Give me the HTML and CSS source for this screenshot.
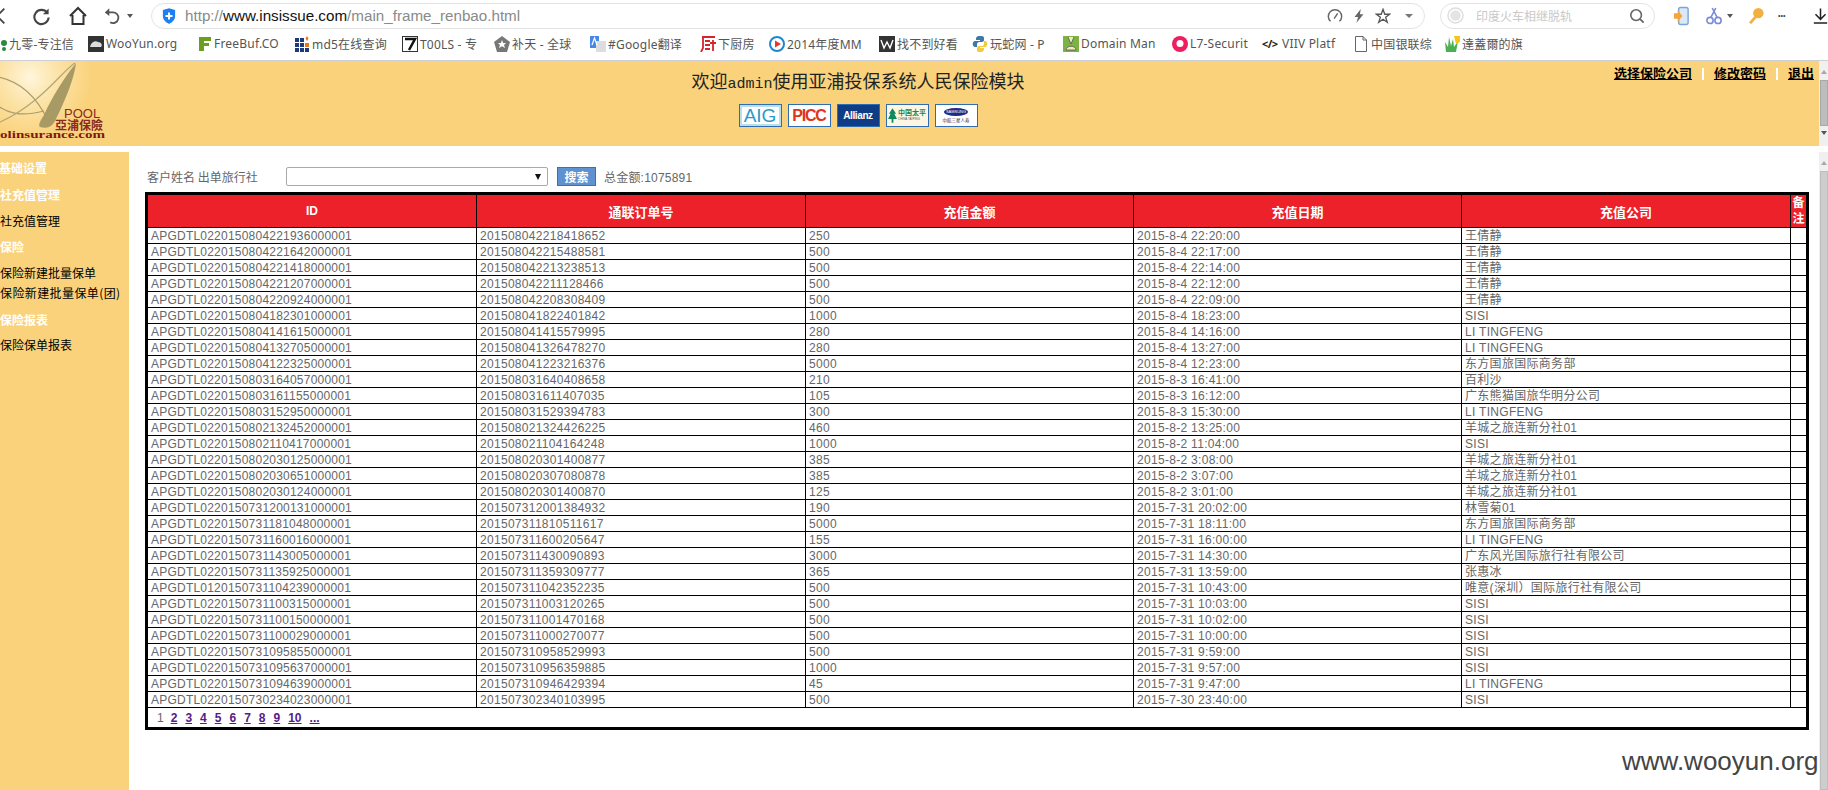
FILE: index.html
```html
<!DOCTYPE html>
<html lang="zh">
<head>
<meta charset="utf-8">
<title>亚浦投保系统</title>
<link rel="stylesheet" href="styles.css">
</head>
<body>
<div class="toolbar">
  <div class="nav">
    <svg class="i back" viewBox="0 0 12 24"><path d="M8 4 L0 12 L8 20" fill="none" stroke="#444" stroke-width="2"/></svg>
    <svg class="i reload" viewBox="0 0 20 20"><path d="M16 6 A7.5 7.5 0 1 0 17.5 11" fill="none" stroke="#444" stroke-width="2.2"/><path d="M17.5 1.5 V7.5 H11.5 Z" fill="#444"/></svg>
    <svg class="i home" viewBox="0 0 20 20"><path d="M2 10 L10 2 L18 10 M4.5 9 V18 H15.5 V9" fill="none" stroke="#333" stroke-width="2"/></svg>
    <svg class="i undo" viewBox="0 0 20 20"><path d="M5 6 H10 A6 6 0 1 1 8 17" fill="none" stroke="#555" stroke-width="2"/><path d="M7 1.5 V10 L2 6 Z" fill="#555"/></svg>
    <span class="caret"></span>
  </div>
  <div class="address">
    <svg class="shield" viewBox="0 0 16 18"><path d="M8 0 L15 2 V9 C15 14 11 16.500 8 18 C5 16.500 1 14 1 9 V2 Z" fill="#1e7ff0"/><path d="M8 5 V13 M4 9 H12" stroke="#fff" stroke-width="2.200"/></svg>
    <span class="url"><span class="dim">http://</span>www.insissue.com<span class="dim">/main_frame_renbao.html</span></span>
    <div class="addr-tools">
      <svg class="i16" viewBox="0 0 18 18"><path d="M4 15 A7.500 7.500 0 1 1 14 15" fill="none" stroke="#666" stroke-width="1.600"/><path d="M8 12 L12 6" stroke="#666" stroke-width="1.600"/></svg>
      <svg class="i16" viewBox="0 0 18 18"><path d="M11 1 L4 10 H8 L6 17 L14 7 H10 Z" fill="#666"/></svg>
      <svg class="i16" viewBox="0 0 18 18"><path d="M9 1.500 L11 7 H16.500 L12 10.500 L13.800 16 L9 12.700 L4.200 16 L6 10.500 L1.500 7 H7 Z" fill="none" stroke="#555" stroke-width="1.500"/></svg>
      <span class="caret"></span>
    </div>
  </div>
  <div class="search">
    <svg class="s-logo" viewBox="0 0 18 18"><circle cx="9" cy="9" r="8" fill="none" stroke="#ddd" stroke-width="1.500"/><circle cx="9" cy="9" r="5.500" fill="#e4e4e4"/></svg>
    <span class="placeholder">印度火车相继脱轨</span>
    <svg class="i16" viewBox="0 0 18 18"><circle cx="8" cy="8" r="6" fill="none" stroke="#666" stroke-width="1.800"/><path d="M12.500 12.500 L16.500 16.500" stroke="#666" stroke-width="2"/></svg>
  </div>
  <div class="tools">
    <svg class="i18 phone" viewBox="0 0 18 20"><rect x="6" y="1" width="10" height="18" rx="2" fill="#dbe8f6" stroke="#7ba6d8" stroke-width="1.500"/><path d="M1 7 H5 V4 L10 10 L5 16 V13 H1 Z" fill="#f5a53c"/></svg>
    <svg class="i18 scissors" viewBox="0 0 18 20"><circle cx="4.500" cy="15" r="3.500" fill="none" stroke="#7b8cd6" stroke-width="1.800"/><circle cx="13.500" cy="15" r="3.500" fill="none" stroke="#7b8cd6" stroke-width="1.800"/><path d="M5.500 11.500 L11 1 M12.500 11.500 L7 1" stroke="#7b8cd6" stroke-width="1.800"/></svg>
    <span class="caret"></span>
    <svg class="i18 key" viewBox="0 0 18 20"><circle cx="12" cy="7" r="5.500" fill="#f3b03f"/><path d="M8 10 L2 17 L4.500 18.500 L10 12 Z" fill="#f3b03f"/></svg>
    <span class="dots">•••</span>
    <svg class="i18 dl" viewBox="0 0 18 20"><path d="M9 1 V13 M3 8 L9 14 L15 8 M1 18.500 H17" fill="none" stroke="#222" stroke-width="1.800"/></svg>
  </div>
</div>

<div class="bookmarks">
  <div class="bm"><svg class="bi" viewBox="0 0 16 16"><circle cx="13" cy="7" r="3" fill="#2a8a3c"/><circle cx="13" cy="13" r="2" fill="#2a8a3c"/></svg><span>九零-专注信</span></div>
  <div class="bm"><svg class="bi" viewBox="0 0 16 16"><rect width="16" height="16" fill="#333"/><path d="M2 11 C3 6 7 4 10 6 C13 6 15 9 13 11 Z" fill="#ddd"/></svg><span>WooYun.org</span></div>
  <div class="bm"><svg class="bi" viewBox="0 0 16 16"><path d="M3 1 H15 V5 H8 V7 H13 V10 H8 V15 H3 Z" fill="#6b9d1f"/></svg><span>FreeBuf.CO</span></div>
  <div class="bm"><svg class="bi" viewBox="0 0 16 16"><path d="M1 2 H5 V6 H1 Z M6 2 H10 V6 H6 Z M1 7 H5 V11 H1 Z M6 7 H10 V11 H6 Z M1 12 H5 V16 H1 Z M6 12 H10 V16 H6 Z M11 12 H15 V16 H11 Z" fill="#1f3a7a"/><path d="M11 7 H15 V11 H11 Z M13 0 L14.500 2.500 L13 5 L11.500 2.500 Z" fill="#e8761e"/></svg><span>md5在线查询</span></div>
  <div class="bm"><svg class="bi" viewBox="0 0 16 16"><rect x="0.500" y="0.500" width="15" height="15" fill="#fff" stroke="#333"/><path d="M3 3 H13 L7 14" fill="none" stroke="#111" stroke-width="2.500"/></svg><span>T00LS - 专</span></div>
  <div class="bm"><svg class="bi" viewBox="0 0 16 16"><path d="M8 0 L16 6 L13 16 H3 L0 6 Z" fill="#777"/><path d="M8 4 L9.200 7 H12 L10 9 L11 12 L8 10.300 L5 12 L6 9 L4 7 H6.800 Z" fill="#fff"/></svg><span>补天 - 全球</span></div>
  <div class="bm"><svg class="bi" viewBox="0 0 16 16"><path d="M0 0 H9 V12 H0 Z" fill="#4a86e8"/><path d="M6 5 H16 V16 H6 Z" fill="#ddd"/><path d="M2 9 L4.500 2 L7 9" fill="none" stroke="#fff" stroke-width="1.200"/></svg><span>#Google翻译</span></div>
  <div class="bm"><svg class="bi" viewBox="0 0 16 16"><path d="M2 1 H15 M3 1 V12 L1 16 M5 5 H10 M5 9 H10 M5 13 H10 M13 4 V15 M10 7 H16" fill="none" stroke="#d8232a" stroke-width="1.800"/></svg><span>下厨房</span></div>
  <div class="bm"><svg class="bi" viewBox="0 0 16 16"><circle cx="8" cy="8" r="7" fill="#fff" stroke="#1f86d0" stroke-width="2"/><path d="M6 4.500 L12 8 L6 11.500 Z" fill="#e8352e"/></svg><span>2014年度MM</span></div>
  <div class="bm"><svg class="bi" viewBox="0 0 16 16"><rect width="16" height="16" fill="#333"/><path d="M2 4 L5 12 L8 6 L11 12 L14 4" fill="none" stroke="#fff" stroke-width="1.400"/></svg><span>找不到好看</span></div>
  <div class="bm"><svg class="bi" viewBox="0 0 16 16"><path d="M8 0 C4 0 4 2 4 4 H8 V5 H3 C0 5 0 11 3 11 H5 V8 C5 7 6 6 7 6 H10 C11 6 12 5 12 4 V2 C12 0 10 0 8 0 Z" fill="#3c78aa"/><path d="M8 16 C12 16 12 14 12 12 H8 V11 H13 C16 11 16 5 13 5 H12 V8 C12 9 11 10 10 10 H7 C6 10 5 11 5 12 V14 C5 16 6 16 8 16 Z" fill="#f5c93c"/></svg><span>玩蛇网 - P</span></div>
  <div class="bm"><svg class="bi" viewBox="0 0 16 16"><rect width="16" height="16" fill="#7cb342"/><path d="M5 1 L8 8 L11 1 M3 14 C3 9 13 9 13 14 Z" fill="#f4e6c0" stroke="#555" stroke-width=".8"/></svg><span>Domain Man</span></div>
  <div class="bm"><svg class="bi" viewBox="0 0 16 16"><circle cx="8" cy="8" r="8" fill="#ee1f5f"/><circle cx="8" cy="7.500" r="3.500" fill="#fff"/></svg><span>L7-Securit</span></div>
  <div class="bm bm-code"><b class="code">&lt;/&gt;</b><span>VIIV Platf</span></div>
  <div class="bm"><svg class="bi" viewBox="0 0 16 16"><path d="M2.500 .5 H10 L13.500 4 V15.500 H2.500 Z M10 .5 V4 H13.500" fill="#fff" stroke="#666"/></svg><span>中国银联综</span></div>
  <div class="bm"><svg class="bi" viewBox="0 0 16 16"><path d="M2 16 L1 6 L4 11 L5 1 L7 10 L9 3 L10 11 L14 5 L12 16 Z" fill="#4caf50"/><path d="M10 0 H16 V6 L12 8 Z" fill="#f5c518"/></svg><span>達蓋爾的旗</span></div>
</div>

<div class="page">
  <div class="content">
    <header class="banner">
      <svg class="logo" viewBox="0 0 107 85">
        <defs>
          <radialGradient id="glow"><stop offset="0" stop-color="#fff6dc"/><stop offset=".45" stop-color="#fce3a8"/><stop offset="1" stop-color="#fad27b"/></radialGradient>
        </defs>
        <rect width="107" height="85" fill="#fad27b"/>
        <circle cx="30" cy="16" r="62" fill="url(#glow)"/>
        <path d="M-2 16 C18 20 36 34 48 60" fill="none" stroke="#a99c6c" stroke-width="1.200"/>
        <path d="M-2 45 C8 52 20 56 44 50" fill="none" stroke="#a99c6c" stroke-width="1.200"/>
        <path d="M75 2 C62 10 40 44 -2 62" fill="none" stroke="#b3a674" stroke-width="1.200"/>
        <path d="M76 2 C74 20 62 46 56 58 C52 66 48 68 40 66 C38 64 40 60 44 54 C52 36 66 14 76 2 Z" fill="#a89a64"/>
        <text class="logo-pool" x="64" y="57">POOL</text>
        <text class="logo-cn" x="55" y="69">亞浦保險</text>
        <text class="logo-site" x="0" y="77" textLength="105" lengthAdjust="spacingAndGlyphs">olinsurance.com</text>
      </svg>
      <div class="banner-center">
        <h1 class="title">欢迎<span class="mono">admin</span>使用亚浦投保系统人民保险模块</h1>
        <div class="insurers">
          <span class="ins ins-aig">AIG</span>
          <span class="ins ins-picc">PICC</span>
          <span class="ins ins-allianz">Allianz</span>
          <span class="ins ins-taiping"><svg class="tree" viewBox="0 0 10 16"><path d="M5 0 L9 6 L7 6 L10 12 H6 V16 H4 V12 H0 L3 6 H1 Z" fill="#0e8a5f"/></svg><span class="tp"><b>中国太平</b><small>CHINA TAIPING</small></span></span>
          <span class="ins ins-samsung"><i>SAMSUNG</i><span>中航三星人寿</span></span>
        </div>
      </div>
      <nav class="account">
        <a href="#">选择保险公司</a><span class="sep"></span><a href="#">修改密码</a><span class="sep"></span><a href="#">退出</a>
      </nav>
    </header>

    <div class="body">
      <aside class="side">
        <p class="side-h first">基础设置</p>
        <p class="side-h wide">社充值管理</p>
        <p class="side-l">社充值管理</p>
        <p class="side-h">保险</p>
        <p class="side-l">保险新建批量保单</p>
        <p class="side-l tight">保险新建批量保单(团)</p>
        <p class="side-h wide">保险报表</p>
        <p class="side-l snug">保险保单报表</p>
      </aside>
      <main class="main">
        <form class="filter">
          <span class="lbl">客户姓名 出单旅行社</span>
          <div class="select"><span class="arrow"></span></div>
          <button class="go" type="button">搜索</button>
          <span class="total">总金额:1075891</span>
        </form>
        <table class="grid">
          <colgroup><col class="c1"><col class="c2"><col class="c3"><col class="c4"><col class="c5"><col class="c6"></colgroup>
          <thead>
            <tr><th class="id">ID</th><th>通联订单号</th><th>充值金额</th><th>充值日期</th><th>充值公司</th><th class="note">备注</th></tr>
          </thead>
          <tbody>
            <tr><td>APGDTL0220150804221936000001</td><td>201508042218418652</td><td>250</td><td>2015-8-4 22:20:00</td><td>王倩静</td><td></td></tr>
            <tr><td>APGDTL0220150804221642000001</td><td>201508042215488581</td><td>500</td><td>2015-8-4 22:17:00</td><td>王倩静</td><td></td></tr>
            <tr><td>APGDTL0220150804221418000001</td><td>201508042213238513</td><td>500</td><td>2015-8-4 22:14:00</td><td>王倩静</td><td></td></tr>
            <tr><td>APGDTL0220150804221207000001</td><td>201508042211128466</td><td>500</td><td>2015-8-4 22:12:00</td><td>王倩静</td><td></td></tr>
            <tr><td>APGDTL0220150804220924000001</td><td>201508042208308409</td><td>500</td><td>2015-8-4 22:09:00</td><td>王倩静</td><td></td></tr>
            <tr><td>APGDTL0220150804182301000001</td><td>201508041822401842</td><td>1000</td><td>2015-8-4 18:23:00</td><td>SISI</td><td></td></tr>
            <tr><td>APGDTL0220150804141615000001</td><td>201508041415579995</td><td>280</td><td>2015-8-4 14:16:00</td><td>LI TINGFENG</td><td></td></tr>
            <tr><td>APGDTL0220150804132705000001</td><td>201508041326478270</td><td>280</td><td>2015-8-4 13:27:00</td><td>LI TINGFENG</td><td></td></tr>
            <tr><td>APGDTL0220150804122325000001</td><td>201508041223216376</td><td>5000</td><td>2015-8-4 12:23:00</td><td>东方国旅国际商务部</td><td></td></tr>
            <tr><td>APGDTL0220150803164057000001</td><td>201508031640408658</td><td>210</td><td>2015-8-3 16:41:00</td><td>百利沙</td><td></td></tr>
            <tr><td>APGDTL0220150803161155000001</td><td>201508031611407035</td><td>105</td><td>2015-8-3 16:12:00</td><td>广东熊猫国旅华明分公司</td><td></td></tr>
            <tr><td>APGDTL0220150803152950000001</td><td>201508031529394783</td><td>300</td><td>2015-8-3 15:30:00</td><td>LI TINGFENG</td><td></td></tr>
            <tr><td>APGDTL0220150802132452000001</td><td>201508021324426225</td><td>460</td><td>2015-8-2 13:25:00</td><td>羊城之旅连新分社01</td><td></td></tr>
            <tr><td>APGDTL0220150802110417000001</td><td>201508021104164248</td><td>1000</td><td>2015-8-2 11:04:00</td><td>SISI</td><td></td></tr>
            <tr><td>APGDTL0220150802030125000001</td><td>201508020301400877</td><td>385</td><td>2015-8-2 3:08:00</td><td>羊城之旅连新分社01</td><td></td></tr>
            <tr><td>APGDTL0220150802030651000001</td><td>201508020307080878</td><td>385</td><td>2015-8-2 3:07:00</td><td>羊城之旅连新分社01</td><td></td></tr>
            <tr><td>APGDTL0220150802030124000001</td><td>201508020301400870</td><td>125</td><td>2015-8-2 3:01:00</td><td>羊城之旅连新分社01</td><td></td></tr>
            <tr><td>APGDTL0220150731200131000001</td><td>201507312001384932</td><td>190</td><td>2015-7-31 20:02:00</td><td>林雪菊01</td><td></td></tr>
            <tr><td>APGDTL0220150731181048000001</td><td>201507311810511617</td><td>5000</td><td>2015-7-31 18:11:00</td><td>东方国旅国际商务部</td><td></td></tr>
            <tr><td>APGDTL0220150731160016000001</td><td>201507311600205647</td><td>155</td><td>2015-7-31 16:00:00</td><td>LI TINGFENG</td><td></td></tr>
            <tr><td>APGDTL0220150731143005000001</td><td>201507311430090893</td><td>3000</td><td>2015-7-31 14:30:00</td><td>广东风光国际旅行社有限公司</td><td></td></tr>
            <tr><td>APGDTL0220150731135925000001</td><td>201507311359309777</td><td>365</td><td>2015-7-31 13:59:00</td><td>张惠冰</td><td></td></tr>
            <tr><td>APGDTL0120150731104239000001</td><td>201507311042352235</td><td>500</td><td>2015-7-31 10:43:00</td><td>唯意(深圳）国际旅行社有限公司</td><td></td></tr>
            <tr><td>APGDTL0220150731100315000001</td><td>201507311003120265</td><td>500</td><td>2015-7-31 10:03:00</td><td>SISI</td><td></td></tr>
            <tr><td>APGDTL0220150731100150000001</td><td>201507311001470168</td><td>500</td><td>2015-7-31 10:02:00</td><td>SISI</td><td></td></tr>
            <tr><td>APGDTL0220150731100029000001</td><td>201507311000270077</td><td>500</td><td>2015-7-31 10:00:00</td><td>SISI</td><td></td></tr>
            <tr><td>APGDTL0220150731095855000001</td><td>201507310958529993</td><td>500</td><td>2015-7-31 9:59:00</td><td>SISI</td><td></td></tr>
            <tr><td>APGDTL0220150731095637000001</td><td>201507310956359885</td><td>1000</td><td>2015-7-31 9:57:00</td><td>SISI</td><td></td></tr>
            <tr><td>APGDTL0220150731094639000001</td><td>201507310946429394</td><td>45</td><td>2015-7-31 9:47:00</td><td>LI TINGFENG</td><td></td></tr>
            <tr><td>APGDTL0220150730234023000001</td><td>201507302340103995</td><td>500</td><td>2015-7-30 23:40:00</td><td>SISI</td><td></td></tr>
          </tbody>
          <tfoot>
            <tr><td class="pager" colspan="6"><span class="cur">1</span><a href="#">2</a><a href="#">3</a><a href="#">4</a><a href="#">5</a><a href="#">6</a><a href="#">7</a><a href="#">8</a><a href="#">9</a><a href="#">10</a><a href="#">...</a></td></tr>
          </tfoot>
        </table>
      </main>
    </div>
  </div>
  <div class="scroll">
    <div class="sb sb-top"><span class="up"></span><span class="thumb"></span><span class="down"></span></div>
    <div class="sb sb-low"><span class="up"></span><span class="thumb long"></span></div>
  </div>
</div>
<div class="mark">www.wooyun.org</div>
</body>
</html>
```

FILE: styles.css
```css
* { box-sizing: border-box; }
html, body { margin: 0; padding: 0; height: 790px; overflow: hidden; background: #fff; }
body { font: 12px "Liberation Sans", "Noto Sans CJK SC", sans-serif; color: #666; position: relative; }

/* browser toolbar */
.toolbar { height: 32px; display: flex; align-items: center; background: #fff; position: relative; }
.nav { width: 151px; display: flex; align-items: center; flex: none; }
.i { display: block; flex: none; }
.back { width: 11px; height: 22px; margin-left: -3px; }
.reload { width: 19px; height: 19px; margin-left: 24px; }
.home { width: 20px; height: 20px; margin-left: 17px; }
.undo { width: 18px; height: 18px; margin-left: 15px; }
.caret { display: block; width: 0; height: 0; flex: none; border: 3px solid transparent; border-top: 4px solid #555; border-bottom: 0; }
.nav .caret { margin-left: 6px; }
.address { width: 1274px; height: 26px; margin-top: -1px; border: 1px solid #e3e3e3; border-radius: 13px; display: flex; align-items: center; padding-left: 10px; flex: none; }
.shield { width: 14px; height: 16px; flex: none; }
.url { margin-left: 9px; font-size: 15.200px; color: #111; white-space: nowrap; }
.dim { color: #8a8a8a; }
.addr-tools { margin-left: auto; display: flex; align-items: center; gap: 8px; padding-right: 11px; }
.addr-tools .caret { margin-left: 6px; border-left-width: 4px; border-right-width: 4px; border-top-color: #777; }
.i16 { width: 16px; height: 16px; display: block; flex: none; }
.search { width: 215px; height: 26px; margin: -1px 0 0 15px; border: 1px solid #e3e3e3; border-radius: 13px; display: flex; align-items: center; padding: 0 9px 0 6px; flex: none; }
.s-logo { width: 17px; height: 17px; flex: none; }
.placeholder { margin-left: 12px; color: #c9c9c9; font-size: 12px; white-space: nowrap; }
.search .i16 { margin-left: auto; }
.tools { display: flex; align-items: center; margin-top: -1px; padding-left: 18px; flex: none; }
.i18 { height: 20px; display: block; flex: none; }
.tools .phone { width: 17px; }
.tools .scissors { margin-left: 16px; width: 16px; }
.tools .caret { margin-left: 5px; }
.tools .key { margin-left: 14px; width: 17px; }
.dots { margin-left: 14px; width: 13px; font-size: 7px; letter-spacing: 0; color: #444; white-space: nowrap; }
.tools .dl { margin-left: 22px; width: 15px; }

/* bookmarks */
.bookmarks { height: 29px; border-bottom: 1px solid #ccd0d6; display: grid; grid-template-columns: 97px 108px 98px 108px 92px 96px 110px 69px 110px 93px 91px 109px 90px 91px 91px 90px; margin-left: -9px; padding-bottom: 5px; align-items: center; width: 1837px; overflow: hidden; }
.bm { display: flex; align-items: center; gap: 2px; font-family: "Noto Sans", "Noto Sans CJK SC", sans-serif; font-size: 12px; letter-spacing: .2px; color: #555; white-space: nowrap; }
.bi { width: 16px; height: 16px; display: block; flex: none; }
.code { width: 18px; color: #222; font-size: 11px; letter-spacing: -.5px; }

/* page */
.page { display: flex; height: 729px; }
.content { width: 1819px; flex: none; }
.banner { height: 85px; background: #fad27b; display: grid; grid-template-columns: 107px 1502px 1fr; }
.logo { width: 107px; height: 85px; display: block; }
.logo-pool { font: 13px "Liberation Sans", sans-serif; fill: #8c2a1e; }
.logo-cn { font: bold 12px "Noto Sans CJK SC", sans-serif; fill: #8c2a1e; }
.logo-site { font: bold 10px "Liberation Serif", serif; fill: #7c1a12; }
.banner-center { display: flex; flex-direction: column; align-items: center; padding-top: 8px; }
.title { margin: 0; font-weight: normal; font-size: 18px; line-height: 22px; color: #222; font-family: "Noto Sans CJK SC", sans-serif; white-space: nowrap; }
.mono { font: 15px "Liberation Mono", monospace; }
.insurers { display: flex; gap: 6px; margin-top: 11px; }
.ins { width: 43px; height: 23px; border: 1px solid #2e6db0; background: #fff; display: flex; align-items: center; justify-content: center; overflow: hidden; white-space: nowrap; }
.ins-aig { font-size: 19px; color: #2b9ac7; box-shadow: inset 0 0 0 2px #b9dfe9; }
.ins-picc { font-size: 16px; font-weight: bold; color: #e0341c; letter-spacing: -1.200px; }
.ins-allianz { background: #0f3d85; color: #fff; font-size: 10px; font-weight: bold; letter-spacing: -.4px; }
.ins-taiping { background: #fdf6e3; color: #0e8a5f; gap: 1px; }
.tree { width: 9px; height: 17px; flex: none; }
.tp { display: flex; flex-direction: column; align-items: flex-start; line-height: 8px; }
.tp b { font-size: 7px; }
.tp small { font-size: 3px; line-height: 5px; color: #555; }
.ins-samsung { flex-direction: column; font-size: 4.500px; color: #1a1a4a; gap: 1px; }
.ins-samsung i { display: block; width: 24px; height: 8px; line-height: 8px; background: #1a2b8a; color: #fff; border-radius: 50%; font-size: 4px; text-align: center; font-style: normal; }
.account { display: flex; justify-content: flex-end; align-items: flex-start; padding: 6px 5px 0 0; }
.account a { font-size: 13px; font-weight: bold; line-height: 14px; color: #000; }
.sep { width: 2px; height: 12px; background: #fff; margin: 1px 10px 0; }

.body { display: flex; margin-top: 6px; height: 638px; }
.side { width: 129px; flex: none; background: #fad27b; font-size: 12px; }
.side p { margin: 0; line-height: 16px; white-space: nowrap; font-family: "Noto Sans CJK SC", sans-serif; }
.side-h { color: #fff; font-weight: bold; margin-top: 10px !important; }
.side-h.first { margin-top: 8px !important; margin-left: -1px !important; }
.side-h.wide { margin-top: 11px !important; }
.side-l { color: #000; margin-top: 10px !important; }
.side-l.tight { margin-top: 4px !important; letter-spacing: .4px; }
.side-l.snug { margin-top: 9px !important; }

.main { width: 1690px; padding: 15px 0 0 16px; }
.filter { display: flex; align-items: center; height: 19px; margin-bottom: 6px; padding-left: 2px; color: #666; }
.lbl { width: 139px; font-family: "Noto Sans CJK SC", sans-serif; }
.select { width: 262px; height: 19px; border: 1px solid #a9a9a9; border-radius: 2px; background: #fff; position: relative; display: flex; align-items: center; justify-content: flex-end; padding-right: 6px; }
.arrow { display: block; width: 0; height: 0; border: 3px solid transparent; border-top: 6px solid #111; border-bottom: 0; }
.go { width: 39px; height: 19px; margin-left: 9px; padding: 0; border: 1px solid #3a70b4; background: #5f92d0; color: #fff; font: bold 12px "Noto Sans CJK SC", sans-serif; }
.total { margin-left: 8px; letter-spacing: .2px; }

.grid { width: 1664px; table-layout: fixed; border-collapse: separate; border-spacing: 0; border: 3px solid #000; background: #fff; }
.c1, .c2, .c5 { width: 329px; }
.c3, .c4 { width: 328px; }
.c6 { width: 15px; }
.grid th { height: 33px; padding: 0; background: #ed2129; color: #fff; font-size: 13px; font-weight: bold; border-right: 1px solid #000; border-bottom: 1px solid #000; font-family: "Liberation Sans", "Noto Sans CJK SC", sans-serif; }
.grid th.id { font-size: 12px; }
.grid th.note { border-right: 0; font-size: 12px; line-height: 16px; }
.grid td { height: 16px; padding: 2px 0 0 3px; line-height: 13px; border-right: 1px solid #000; border-bottom: 1px solid #000; color: #666; letter-spacing: .3px; white-space: nowrap; overflow: hidden; }
.grid td:first-child { letter-spacing: .22px; }
.grid td:last-child { border-right: 0; }
.grid td.pager { height: 19px; border: 0; padding: 0 0 0 9px; line-height: 18px; letter-spacing: 0; overflow: visible; }
.cur { margin-right: 7px; }
.pager a { margin-right: 8px; color: #551a8b; font-weight: bold; text-decoration: underline; }

/* scrollbar column */
.scroll { width: 9px; flex: none; display: flex; flex-direction: column; background: #fff; }
.sb { display: flex; flex-direction: column; align-items: center; padding-top: 9px; background: #f0f0f0; }
.sb-top { height: 85px; }
.sb-low { margin-top: 6px; flex: 1; }
.up, .down { display: block; width: 0; height: 0; flex: none; border: 3px solid transparent; }
.up { border-top: 0; border-bottom: 4px solid #a8a8a8; }
.down { margin-top: 5px; border-bottom: 0; border-top: 4px solid #555; }
.thumb { display: block; width: 8px; height: 46px; margin: 6px 0 0 1px; flex: none; background: #bdbdbd; border: 1px solid #a8a8a8; }
.thumb.long { flex: 1; background: #cdcdcd; border-color: #bdbdbd; }

.mark { position: absolute; left: 1622px; top: 745px; font-size: 26px; line-height: 32px; color: #444; white-space: nowrap; }
```
